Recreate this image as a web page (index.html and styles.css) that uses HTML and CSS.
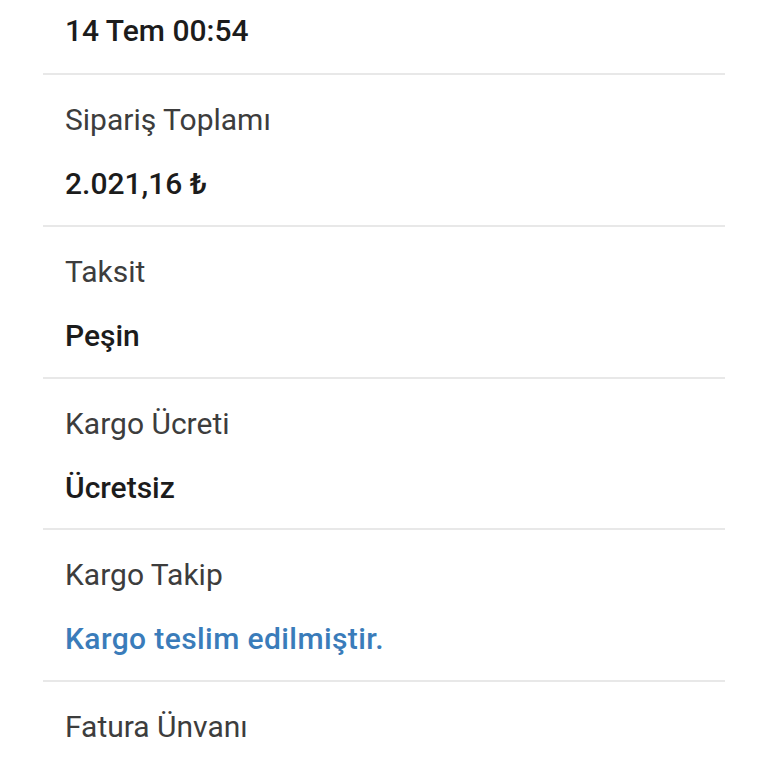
FILE: index.html
```html
<!DOCTYPE html>
<html lang="tr">
	<head>
		<meta charset="utf-8">
		<meta name="viewport" content="width=device-width">
		<title>Sipariş Detayı</title>
		<link rel="stylesheet" href="styles.css">
	</head>
	<body>
		<div class="order">
			<div class="row first">
				<div class="value">14 Tem 00:54</div>
			</div>
			<div class="row">
				<div class="label">Sipariş Toplamı</div>
				<div class="value">2.021,16 ₺</div>
			</div>
			<div class="row">
				<div class="label">Taksit</div>
				<div class="value">Peşin</div>
			</div>
			<div class="row">
				<div class="label">Kargo Ücreti</div>
				<div class="value">Ücretsiz</div>
			</div>
			<div class="row">
				<div class="label">Kargo Takip</div>
				<div class="value link">Kargo teslim edilmiştir.</div>
			</div>
			<div class="row last">
				<div class="label">Fatura Ünvanı</div>
			</div>
		</div>
	</body>
</html>
```

FILE: styles.css
```css
body{
	margin:0;
	background:#fff;
	font-family:Roboto,"Noto Sans",sans-serif;
	font-size:30px;
	line-height:36px;
}

.order{
	padding:0 43px;
}

.row{
	display:flex;
	flex-direction:column;
	gap:28px;
	padding:27px 22px 22.8px;
	border-top:2px solid #e8e8e8;
}

.row.first{
	border-top:none;
	padding-top:13px;
	padding-bottom:24px;
}

.label{
	color:#3d3d3d;
	font-weight:400;
}

.value{
	color:#1c1c1c;
	font-weight:500;
}

.value.link{
	color:#3a7cba;
	letter-spacing:0.4px;
}
```
